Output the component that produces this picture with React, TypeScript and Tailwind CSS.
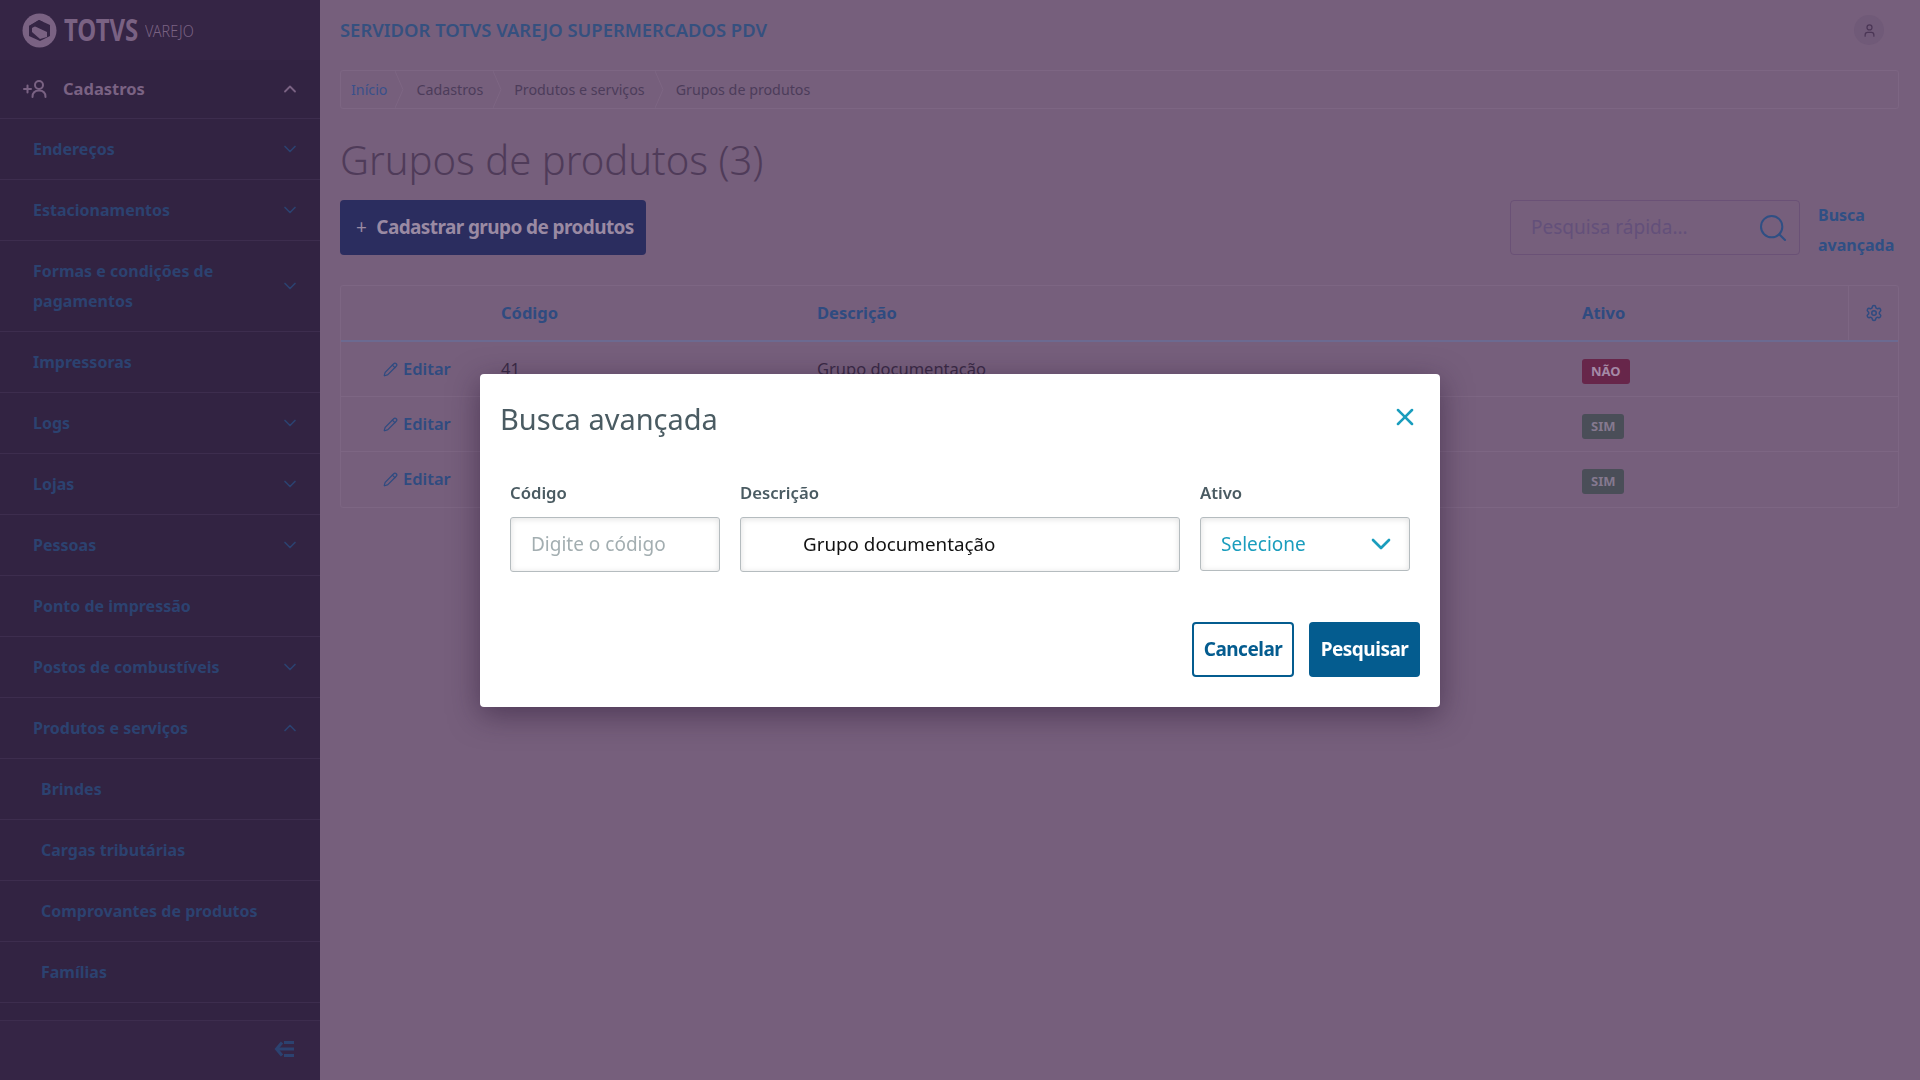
import { ChevronDown, ChevronUp, Pencil, Search, Settings, User, X } from 'lucide-react'

const FONT = 'font-["Noto_Sans",sans-serif]'

interface MenuItem {
  label: string
  sub?: boolean
  open?: boolean
  arrow?: boolean
}

const menu: MenuItem[] = [
  { label: 'Endereços', arrow: true },
  { label: 'Estacionamentos', arrow: true },
  { label: 'Formas e condições de pagamentos', arrow: true },
  { label: 'Impressoras' },
  { label: 'Logs', arrow: true },
  { label: 'Lojas', arrow: true },
  { label: 'Pessoas', arrow: true },
  { label: 'Ponto de impressão' },
  { label: 'Postos de combustíveis', arrow: true },
  { label: 'Produtos e serviços', arrow: true, open: true },
  { label: 'Brindes', sub: true },
  { label: 'Cargas tributárias', sub: true },
  { label: 'Comprovantes de produtos', sub: true },
  { label: 'Famílias', sub: true },
]

const crumbs = ['Início', 'Cadastros', 'Produtos e serviços', 'Grupos de produtos']

const rows = [
  { code: '41', desc: 'Grupo documentação', active: false },
  { code: '', desc: '', active: true },
  { code: '', desc: '', active: true },
]

function Logo() {
  return (
    <div className="flex h-[60px] items-center pl-[22px] text-[#7a6283]">
      <svg width="35" height="35" viewBox="0 0 35 35">
        <circle cx="17.500" cy="17.500" r="17" fill="currentColor" />
        <path d="M7 13 L17 7 L28 12 L28 23 L18 28 L7 23 Z" fill="#352545" />
        <path d="M10 12 L25 19 L25 24 L18 26 L10 19 Z" fill="currentColor" />
        <path d="M7 13 L17 7 L21 9 L10 15 Z" fill="#352545" />
      </svg>
      <span className="ml-[7px] inline-block w-[75px] origin-left scale-x-[0.8] text-[30px] font-bold leading-none">TOTVS</span>
      <span className="ml-[6px] mt-[2px] inline-block w-[49px] origin-left scale-x-[0.9] text-[16px] font-light leading-none">VAREJO</span>
    </div>
  )
}

function Sidebar() {
  return (
    <aside className="flex h-screen w-[320px] shrink-0 flex-col bg-[#352545]">
      <Logo />
      <div className="min-h-0 flex-1 overflow-hidden bg-[#322342]">
        <div className="flex h-[59px] items-center border-b border-[#3d2d4e] pl-[23px] pr-[20px] text-[#7a6283]">
          <svg width="26" height="20" viewBox="0 0 26 20" fill="none" stroke="currentColor" strokeWidth="2" strokeLinecap="round">
            <path d="M1 10h7M4.500 6.500v7" />
            <circle cx="16" cy="6" r="4" />
            <path d="M9.500 18c0-4 2.500-6.500 6.500-6.500s6.500 2.500 6.500 6.500" />
          </svg>
          <span className="ml-[14px] flex-1 text-[16.500px] font-bold">Cadastros</span>
          <ChevronUp size={20} strokeWidth={2.2} />
        </div>
        {menu.map((item) => (
          <div
            key={item.label}
            className={`flex items-center border-b border-[#3d2d4e] py-[15px] pr-[20px] text-[#2c4270] ${item.sub ? 'pl-[41px]' : 'pl-[33px]'}`}
          >
            <span className="flex-1 pr-[40px] text-[16px] font-bold leading-[30px]">{item.label}</span>
            {item.arrow && (item.open ? <ChevronUp size={20} strokeWidth={2} /> : <ChevronDown size={20} strokeWidth={2} />)}
          </div>
        ))}
      </div>
      <div className="flex h-[60px] shrink-0 items-center justify-end border-t border-[#3d2d4e] pb-[4px] pr-[25px] text-[#2c4270]">
        <svg width="21" height="16" viewBox="0 0 21 16" fill="none" stroke="currentColor" strokeWidth="3">
          <path d="M8 1.500 L2.500 8 L8 14.500" />
          <path d="M2.500 8H20M10 1.500h10M10 14.500h10" />
        </svg>
      </div>
    </aside>
  )
}

function Content() {
  return (
    <main className="min-w-0 flex-1 pl-[20px] pr-[21px]">
      <div className="flex h-[60px] items-center justify-between pr-[15px]">
        <span className="text-[18.400px] font-semibold text-[#35507f]">SERVIDOR TOTVS VAREJO SUPERMERCADOS PDV</span>
        <span className="flex h-[30px] w-[30px] items-center justify-center rounded-full bg-[#705a78] text-[#4b3656]">
          <User size={15} />
        </span>
      </div>

      <nav className="mt-[10px] flex h-[39px] items-center rounded-[3px] border border-[#7d6683] pl-[10px] text-[14.250px]">
        {crumbs.map((crumb, i) => (
          <span key={crumb} className="flex h-full items-center">
            <span className={i === 0 ? 'text-[#39508a]' : 'text-[#4c3c5a]'}>{crumb}</span>
            {i < crumbs.length - 1 && (
              <svg className={`mr-[12px] ${i === 0 ? 'ml-[8px]' : 'ml-[10px]'}`} width="9" height="37" viewBox="0 0 9 37" fill="none" stroke="#7d6683">
                <path d="M0 0 L8 18.500 L0 37" />
              </svg>
            )}
          </span>
        ))}
      </nav>

      <h1 className="mt-[20px] text-[40px] font-light leading-[62px] text-[#4f3b59]">Grupos de produtos (3)</h1>

      <div className="mt-[9px] flex items-start justify-between">
        <button className="flex h-[55px] w-[306px] items-center whitespace-nowrap rounded-[4px] bg-[#2b2d5f] pl-[16px] text-[19px] font-bold tracking-[-0.6px] text-[#9a8aa3]">
          <span className="mr-[10px] font-normal">+</span>
          Cadastrar grupo de produtos
        </button>
        <div className="flex items-start">
          <div className="flex h-[55px] w-[290px] items-center justify-between rounded-[4px] border border-[#6a5176] pl-[20px] pr-[10px] text-[19px] text-[#63507a]">
            <span>Pesquisa rápida...</span>
            <Search size={32} strokeWidth={1.5} className="text-[#2f4f84]" />
          </div>
          <a className="ml-[18px] w-[81px] text-[16px] font-bold leading-[30px] text-[#2f4f84]">Busca avançada</a>
        </div>
      </div>

      <div className="mt-[25px] rounded-[3px] border border-[#7d6683]">
        <div className="flex h-[56px] items-center border-b-2 border-[#6c6a91] text-[16.500px] font-bold text-[#2f4b80]">
          <span className="w-[160px]" />
          <span className="w-[316px]">Código</span>
          <span className="w-[765px]">Descrição</span>
          <span className="flex-1">Ativo</span>
          <span className="flex h-full w-[50px] items-center justify-center border-l border-[#7d6683] pl-[1px]">
            <Settings size={18} />
          </span>
        </div>
        {rows.map((row, i) => (
          <div key={i} className="flex h-[55px] items-center border-b border-[#7d6683] text-[16.500px] last:border-b-0">
            <span className="flex w-[160px] items-center pl-[42px] font-semibold text-[#2f4b80]">
              <Pencil size={15} className="mr-[5px]" />
              Editar
            </span>
            <span className="w-[316px] text-[#3a2a46]">{row.code}</span>
            <span className="w-[765px] text-[#3a2a46]">{row.desc}</span>
            <span
              className={`mt-[4px] rounded-[3px] px-[9px] text-[13px] font-bold leading-[25px] ${row.active ? 'bg-[#4a4e58] text-[#85798f]' : 'bg-[#67264a] text-[#a48aa6]'}`}
            >
              {row.active ? 'SIM' : 'NÃO'}
            </span>
          </div>
        ))}
      </div>
    </main>
  )
}

function Field({ label, width, height = 'h-[55px]', children }: { label: string; width: string; height?: string; children: React.ReactNode }) {
  return (
    <div className={width}>
      <label className="block text-[16.700px] font-semibold leading-[24px] text-[#4a5b62]">{label}</label>
      <div className={`mt-[12px] flex items-center justify-between rounded-[3px] border border-[#b5bcbf] shadow-[inset_0_1px_6px_rgba(0,0,0,0.12)] ${height}`}>
        {children}
      </div>
    </div>
  )
}

function SearchModal() {
  return (
    <div className="fixed inset-0 flex justify-center pt-[374px]">
      <div className="h-[333px] w-[960px] rounded-[4px] bg-white px-[20px] shadow-[0_8px_30px_rgba(40,20,50,0.5)]">
        <div className="flex h-[89px] items-center justify-between">
          <h2 className="text-[29px] leading-none text-[#4a5b62]">Busca avançada</h2>
          <button className="mb-[3px] mr-[1px] text-[#1a9dbd]">
            <X size={28} strokeWidth={2.2} />
          </button>
        </div>
        <div className="ml-[10px] mt-[18px] flex gap-[20px]">
          <Field label="Código" width="w-[210px]">
            <span className="pl-[20px] text-[19px] text-[#a3aeb1]">Digite o código</span>
          </Field>
          <Field label="Descrição" width="w-[440px]">
            <span className="pl-[62px] text-[18.800px] text-[#111]">Grupo documentação</span>
          </Field>
          <Field label="Ativo" width="w-[210px]" height="h-[54px]">
            <span className="pl-[20px] text-[19px] text-[#1a9dbd]">Selecione</span>
            <ChevronDown size={32} strokeWidth={2} className="mr-[12px] text-[#1a9dbd]" />
          </Field>
        </div>
        <div className="mt-[50px] flex justify-end gap-[15px]">
          <button className="h-[55px] w-[102px] rounded-[4px] border-2 border-[#045c8f] text-[19px] font-bold tracking-[-0.5px] text-[#045c8f]">
            Cancelar
          </button>
          <button className="h-[55px] w-[111px] rounded-[4px] bg-[#045c8f] text-[19px] font-bold tracking-[-0.5px] text-white">
            Pesquisar
          </button>
        </div>
      </div>
    </div>
  )
}

export default function App() {
  return (
    <div className={`flex h-screen overflow-hidden bg-[#765f7c] ${FONT}`}>
      <Sidebar />
      <Content />
      <SearchModal />
    </div>
  )
}
